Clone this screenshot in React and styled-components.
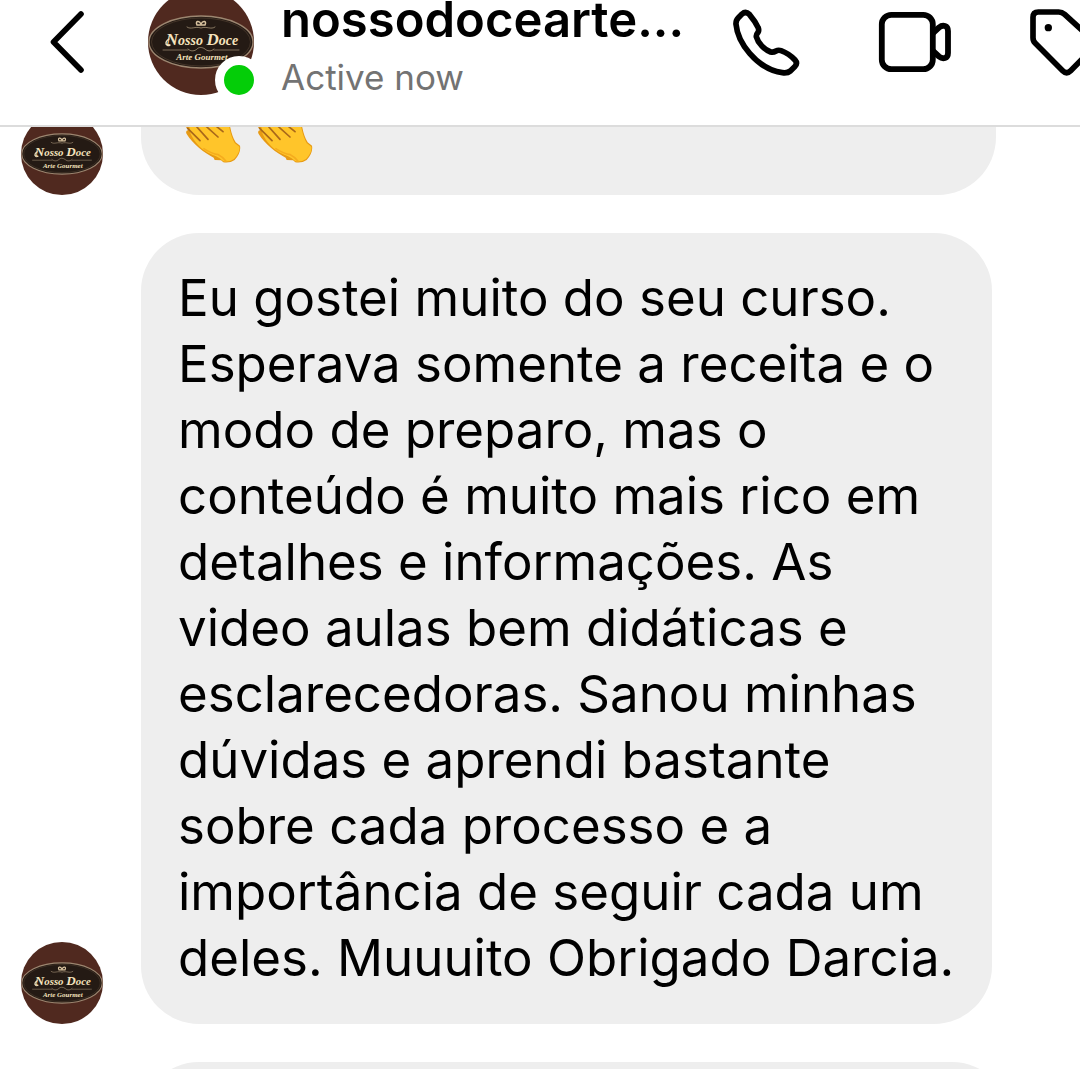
import React from 'react';
import styled, { createGlobalStyle } from 'styled-components';

const Logo = () => (
  <svg viewBox="0 0 106 106" width="100%" height="100%" role="img" aria-label="Nosso Doce">
    <circle cx="53" cy="53" r="53" fill="#50291f" />
    <ellipse cx="53" cy="53" rx="52" ry="26" fill="#241a14" stroke="#9c8670" strokeWidth="1.4" />
    <ellipse cx="53" cy="53" rx="49.5" ry="24" fill="none" stroke="#4f3d2f" strokeWidth="0.7" />
    <g fill="none" stroke="#d9c3a0" strokeLinecap="round">
      <path d="M49 36c-2-4 2-5 4-1c2-4 6-3 4 1z" strokeWidth="1.5" />
      <path d="M39 38c4 3 8-1 14 1c6-2 10 2 14-1" strokeWidth="0.8" opacity="0.7" />
      <path d="M15 61H40M66 61H91" strokeWidth="0.7" opacity="0.7" />
      <path d="M40 60c3 3 7 2 9 0c2-2 5-2 8 0c2 2 6 3 9 0" strokeWidth="0.8" opacity="0.7" />
      <path d="M21 50C16 53 18 58 22 56" strokeWidth="1.4" stroke="#f4e2bd" />
    </g>
    <g
      fill="#f4e2bd"
      textAnchor="middle"
      fontFamily="'Liberation Serif', serif"
      fontStyle="italic"
      fontWeight="700"
    >
      <text x="54" y="56" fontSize="14">
        <tspan fontSize="17">N</tspan>osso <tspan fontSize="17">D</tspan>oce
      </text>
      <text x="54" y="71" fontSize="9">
        Arte Gourmet
      </text>
    </g>
  </svg>
);

const BackIcon = () => (
  <svg viewBox="0 0 34 62" width="34" height="62" aria-hidden="true">
    <path
      d="M31 3L3.5 31L31 59"
      fill="none"
      stroke="#000"
      strokeWidth="5.6"
      strokeLinecap="round"
      strokeLinejoin="round"
    />
  </svg>
);

const PhoneIcon = () => (
  <svg viewBox="72 24 201 201" width="67" height="67" aria-hidden="true">
    <path
      d="M99 39L88 50Q80 58 81 70C84 101 99 131 122 157C150 189 184 211 220 215Q236 217 244 210L257 197Q267 187 258 177C247 165 232 155 216 149Q208 146 201 150Q193 155 185 153C166 146 147 126 142 107Q141 101 147 94Q151 87 147 79C141 66 132 53 121 40Q110 29 99 39Z"
      fill="none"
      stroke="#000"
      strokeWidth="17"
      strokeLinejoin="round"
    />
  </svg>
);

const VideoIcon = () => (
  <svg viewBox="0 0 74 62" width="74" height="62" aria-hidden="true">
    <g fill="none" stroke="#000" strokeWidth="5.8" strokeLinejoin="round">
      <rect x="3.8" y="3.8" width="51" height="54.4" rx="9.5" />
      <path d="M55 22L61 16.500Q64 14 67 15Q70 16 70 20V42Q70 46 67 47Q64 48 61 45.500L55 40" />
    </g>
  </svg>
);

const TagIcon = () => (
  <svg viewBox="960 26 222 201" width="74" height="67" aria-hidden="true">
    <path
      d="M985 35H1046Q1056 35 1064 42L1150 121Q1161 132 1150 143L1082 211Q1070 223 1058 211L976 129Q969 122 969 112V51Q969 35 985 35Z"
      fill="none"
      stroke="#000"
      strokeWidth="17"
      strokeLinejoin="round"
    />
    <circle cx="1015" cy="82" r="11" />
  </svg>
);

const Clap = () => (
  <svg viewBox="135 -39 174 198" width="58" height="66" role="img" aria-label="👏">
    <path
      d="M150 10Q160 0 172 12L215 45L226 -10Q240 -28 252 -8L270 48Q276 80 287 97L300 107Q304 128 284 150Q270 160 250 157L243 151L224 150L221 143C195 130 158 102 140 72Q135 62 145 60L135 48Q136 34 150 40L142 24Q142 12 150 10Z"
      fill="#e79a14"
    />
    <path
      d="M160 16Q168 8 178 18L215 50L230 -6Q240 -22 249 -4L267 48Q273 80 284 99L298 110Q301 126 282 147Q268 157 250 154C235 138 222 138 204 128C182 115 164 98 152 72L148 50Q150 38 163 42L154 28Q154 18 160 16Z"
      fill="#ffc52a"
    />
    <path
      d="M190 115Q215 131 235 134Q248 140 258 154"
      fill="none"
      stroke="#f5ac1e"
      strokeWidth="5"
    />
    <path
      d="M143 55L180 92M168 48L204 88M195 46L234 81M224 45L249 65"
      fill="none"
      stroke="#a9681a"
      strokeWidth="5"
      strokeLinecap="round"
    />
  </svg>
);

const App = () => (
  <Page>
    <GlobalStyle />
    <Header>
      <HeaderContent>
        <BackButton type="button" aria-label="Back">
          <BackIcon />
        </BackButton>
        <Avatar size={106}>
          <Logo />
          <OnlineBadge />
        </Avatar>
        <Contact>
          <ContactName>nossodocearte...</ContactName>
          <ContactStatus>Active now</ContactStatus>
        </Contact>
        <Actions>
          <IconButton type="button" aria-label="Call">
            <PhoneIcon />
          </IconButton>
          <IconButton type="button" aria-label="Video call">
            <VideoIcon />
          </IconButton>
          <IconButton type="button" aria-label="Label">
            <TagIcon />
          </IconButton>
        </Actions>
      </HeaderContent>
    </Header>

    <Thread>
      <ScrolledMessage>
        <Avatar size={82}>
          <Logo />
        </Avatar>
        <EmojiBubble>
          <Clap />
          <Clap />
        </EmojiBubble>
      </ScrolledMessage>

      <Message>
        <Avatar size={82}>
          <Logo />
        </Avatar>
        <TextBubble>
          Eu gostei muito do seu curso. Esperava somente a receita e o modo de preparo, mas o
          conteúdo é muito mais rico em detalhes e informações. As video aulas bem didáticas e
          esclarecedoras. Sanou minhas dúvidas e aprendi bastante sobre cada processo e a
          importância de seguir cada um deles. Muuuito Obrigado Darcia.
        </TextBubble>
      </Message>

      <NextMessage>
        <NextBubble />
      </NextMessage>
    </Thread>
  </Page>
);

const GlobalStyle = createGlobalStyle`
  * {
    box-sizing: border-box;
  }

  body {
    margin: 0;
    background: #fff;
    color: #000;
    font-family: Inter, 'Liberation Sans', sans-serif;
  }

  svg {
    display: block;
    flex-shrink: 0;
  }
`;

const Page = styled.main`
  overflow: hidden;
`;

const Header = styled.header`
  height: 127px;
  border-bottom: 2px solid #dcdcdc;
`;

const HeaderContent = styled.div`
  display: flex;
  align-items: center;
  height: 84px;
  margin-right: -24px;
  padding-left: 50px;
`;

const IconButton = styled.button`
  flex-shrink: 0;
  padding: 0;
  border: 0;
  background: none;
  cursor: pointer;
`;

const BackButton = styled(IconButton)`
  margin-right: 64px;
`;

const Avatar = styled.div`
  position: relative;
  flex-shrink: 0;
  width: ${({ size }) => size}px;
  height: ${({ size }) => size}px;
`;

const OnlineBadge = styled.span`
  position: absolute;
  right: -9px;
  bottom: -9px;
  width: 48px;
  height: 48px;
  border: 9px solid #fff;
  border-radius: 50%;
  background: #04cd08;
`;

const Contact = styled.div`
  flex: 1;
  min-width: 0;
  margin-left: 27px;
  padding-top: 12px;
  white-space: nowrap;
`;

const ContactName = styled.h1`
  margin: 0;
  font-size: 49px;
  font-weight: 600;
  line-height: 58px;
`;

const ContactStatus = styled.p`
  margin: 0;
  color: #737373;
  font-size: 35px;
  line-height: 56px;
`;

const Actions = styled.div`
  display: flex;
  align-items: center;
  gap: 78px;
`;

const Thread = styled.section`
  display: flex;
  flex-direction: column;
  gap: 38px;
  overflow: hidden;
`;

const Message = styled.article`
  display: flex;
  align-items: flex-end;
  gap: 38px;
  padding: 0 88px 0 21px;
`;

const ScrolledMessage = styled(Message)`
  margin-top: -72px;
  padding-right: 84px;
`;

const Bubble = styled.div`
  flex: 1;
  border-radius: 58px;
  background: #eee;
`;

const EmojiBubble = styled(Bubble)`
  display: flex;
  align-items: flex-end;
  gap: 14px;
  height: 140px;
  padding: 0 44px 32px;
`;

const TextBubble = styled(Bubble)`
  padding: 32px 32px 33px 37px;
  font-size: 51px;
  line-height: 66px;
`;

const NextMessage = styled.div`
  height: 7px;
  overflow: hidden;
  padding: 0 70px 0 141px;
`;

const NextBubble = styled(Bubble)`
  height: 140px;
`;

export default App;
